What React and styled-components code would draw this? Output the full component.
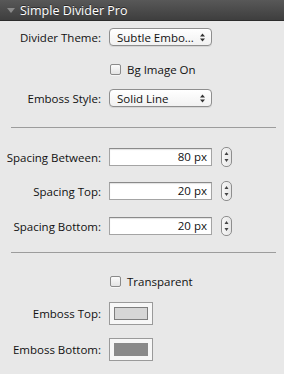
import styled, { createGlobalStyle } from 'styled-components'

const GlobalStyle = createGlobalStyle`
  html, body {
    margin: 0;
    padding: 0;
    background: #e8e8e8;
  }
  body {
    font-family: "Open Sans", "DejaVu Sans", sans-serif;
    font-size: 11.5px;
    color: #111;
  }
`

const Panel = styled.div`
  width: 284px;
  height: 374px;
  background: #e8e8e8;
  display: flex;
  flex-direction: column;
`

const Header = styled.header`
  height: 20px;
  display: flex;
  align-items: center;
  gap: 5px;
  padding-left: 7px;
  background: linear-gradient(#585858, #3e3e3e);
  border-bottom: 1px solid #2c2c2c;
  color: #fff;
  font-size: 12.5px;
  text-shadow: 0 -1px 0 rgba(0, 0, 0, 0.5);
`

const Triangle = styled.span`
  width: 0;
  height: 0;
  border-left: 4px solid transparent;
  border-right: 4px solid transparent;
  border-top: 5px solid #8a8a8a;
  margin-top: 1px;
`

const Section = styled.section`
  display: flex;
  flex-direction: column;
  padding-top: ${p => p.$pt}px;
  padding-bottom: ${p => p.$pb}px;
`

const Rule = styled.hr`
  margin: 0 8px 0 11px;
  border: 0;
  height: 1px;
  background: #9c9c9c;
`

const Row = styled.div`
  display: grid;
  grid-template-columns: 101px auto 1fr;
  column-gap: 8px;
  align-items: center;
  height: ${p => p.$h || 18}px;
  margin-top: ${p => p.$mt || 0}px;
`

const Label = styled.label`
  text-align: right;
  white-space: nowrap;
`

const Select = styled.div`
  box-sizing: border-box;
  width: 103px;
  height: 18px;
  border: 1px solid #8e8e8e;
  border-radius: 4px;
  background: linear-gradient(#ffffff, #f1f1f1);
  box-shadow: 0 1px 0 rgba(0, 0, 0, 0.08);
  display: flex;
  align-items: center;
  justify-content: space-between;
  padding: 0 6px 0 7px;
  white-space: nowrap;
`

const Arrows = styled.svg`
  width: 5px;
  height: 9px;
  flex: none;
`

const TextField = styled.div`
  box-sizing: border-box;
  width: 103px;
  height: 18px;
  background: #fff;
  border: 1px solid #a4a4a4;
  border-top-color: #8a8a8a;
  box-shadow: inset 0 1px 1px rgba(0, 0, 0, 0.12);
  text-align: right;
  padding-right: 4px;
  line-height: 16px;
`

const Stepper = styled.div`
  box-sizing: border-box;
  width: 11px;
  height: 20px;
  margin-left: 1px;
  border: 1px solid #8e8e8e;
  border-radius: 5px;
  background: linear-gradient(to right, #f7f7f7, #e6e6e6);
  display: flex;
  align-items: center;
  justify-content: center;
`

const CheckRow = styled.label`
  grid-column: 2 / 4;
  display: flex;
  align-items: center;
  gap: 6px;
  margin-left: 1px;
`

const Box = styled.span`
  box-sizing: border-box;
  width: 11px;
  height: 11px;
  border: 1px solid #8a8a8a;
  border-radius: 2px;
  background: linear-gradient(#fbfbfb, #e4e4e4);
  box-shadow: 0 1px 0 rgba(255, 255, 255, 0.6);
`

const Swatch = styled.div`
  box-sizing: border-box;
  width: 44px;
  height: 23px;
  border: 1px solid #9a9a9a;
  background: #f7f7f7;
  padding: 4px;
`

const SwatchFill = styled.div`
  height: 100%;
  background: ${p => p.$color};
  border: ${p => (p.$framed ? '1px solid #7e7e7e' : 'none')};
  box-sizing: border-box;
`

const PopupArrows = () => (
  <Arrows viewBox="0 0 5 9">
    <path d="M2.5 0.5 L5 3.5 H0 Z M0 5.5 H5 L2.5 8.5 Z" fill="#333" />
  </Arrows>
)

const StepArrows = () => (
  <svg width="5" height="12" viewBox="0 0 5 12">
    <path d="M2.5 1 L4.5 4 H0.5 Z M0.5 8 H4.5 L2.5 11 Z" fill="#444" />
  </svg>
)

const SelectRow = ({ label, value, mt }) => (
  <Row $mt={mt}>
    <Label>{label}</Label>
    <Select>
      <span>{value}</span>
      <PopupArrows />
    </Select>
  </Row>
)

const CheckboxRow = ({ label, mt }) => (
  <Row $mt={mt}>
    <span />
    <CheckRow>
      <Box />
      {label}
    </CheckRow>
  </Row>
)

const NumberRow = ({ label, value, mt }) => (
  <Row $mt={mt}>
    <Label>{label}</Label>
    <TextField>{value} px</TextField>
    <Stepper>
      <StepArrows />
    </Stepper>
  </Row>
)

const ColorRow = ({ label, color, framed, mt }) => (
  <Row $mt={mt} $h={23}>
    <Label>{label}</Label>
    <Swatch>
      <SwatchFill $color={color} $framed={framed} />
    </Swatch>
  </Row>
)

export default function App() {
  return (
    <Panel>
      <GlobalStyle />
      <Header>
        <Triangle />
        <span>Simple Divider Pro</span>
      </Header>

      <Section $pt={7} $pb={20}>
        <SelectRow label="Divider Theme:" value="Subtle Embo..." />
        <CheckboxRow label="Bg Image On" mt={14} />
        <SelectRow label="Emboss Style:" value="Solid Line" mt={11} />
      </Section>

      <Rule />

      <Section $pt={19} $pb={18}>
        <NumberRow label="Spacing Between:" value="80" />
        <NumberRow label="Spacing Top:" value="20" mt={16} />
        <NumberRow label="Spacing Bottom:" value="20" mt={17} />
      </Section>

      <Rule />

      <Section $pt={19} $pb={0}>
        <CheckboxRow label="Transparent" />
        <ColorRow label="Emboss Top:" color="#d6d6d6" framed mt={12} />
        <ColorRow label="Emboss Bottom:" color="#8a8a8a" mt={13} />
      </Section>
    </Panel>
  )
}
